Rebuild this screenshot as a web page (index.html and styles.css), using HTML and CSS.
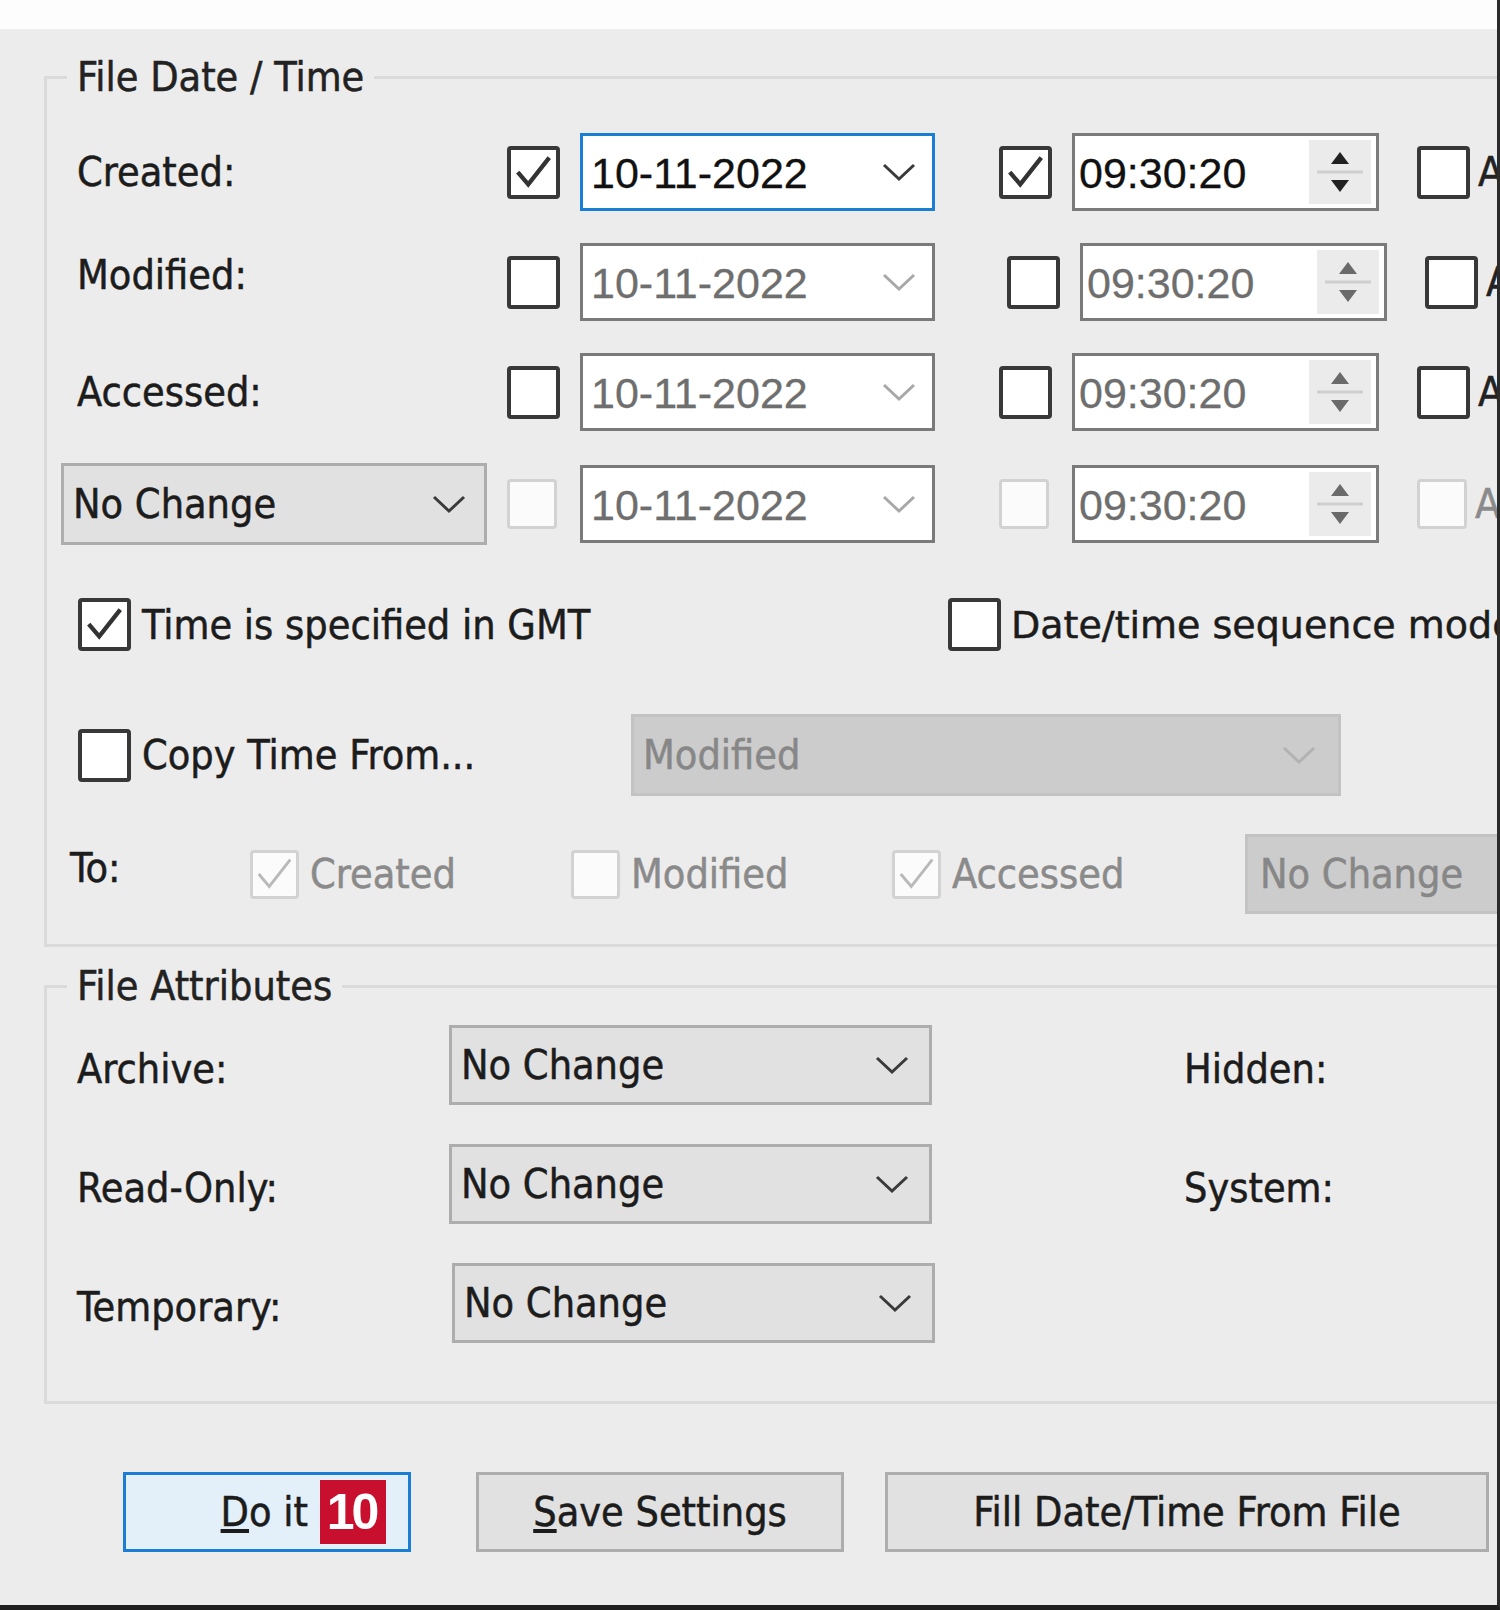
FILE: index.html
```html
<!DOCTYPE html>
<html lang="en">
<head>
<meta charset="utf-8">
<title>File Date / Time</title>
<link rel="stylesheet" href="styles.css">
</head>
<body>
<div class="window">
  <div class="titlebar"></div>

  <fieldset class="group group-dates">
    <legend>File Date / Time</legend>

    <div class="dt-row">
      <span class="lbl">Created:</span>
      <span class="cb checked"><svg viewBox="0 0 45 45"><polyline points="6,22 17,35 39,7"/></svg></span>
      <div class="field date focus"><span class="val">10-11-2022</span><svg class="chev" viewBox="0 0 34 20"><polyline points="2,3 17,17 32,3"/></svg></div>
      <span class="cb cb2 checked"><svg viewBox="0 0 45 45"><polyline points="6,22 17,35 39,7"/></svg></span>
      <div class="field time"><span class="val">09:30:20</span><span class="spin"><svg viewBox="0 0 62 64"><polygon class="arr" points="31,12 40,24 22,24"/><line x1="8" y1="32" x2="54" y2="32"/><polygon class="arr" points="22,40 40,40 31,52"/></svg></span></div>
      <span class="tail"><span class="cb"></span><span class="cut">A</span></span>
    </div>

    <div class="dt-row shift">
      <span class="lbl lbl-up">Modified:</span>
      <span class="cb"></span>
      <div class="field date off"><span class="val">10-11-2022</span><svg class="chev" viewBox="0 0 34 20"><polyline points="2,3 17,17 32,3"/></svg></div>
      <span class="cb cb2"></span>
      <div class="field time off"><span class="val">09:30:20</span><span class="spin"><svg viewBox="0 0 62 64"><polygon class="arr" points="31,12 40,24 22,24"/><line x1="8" y1="32" x2="54" y2="32"/><polygon class="arr" points="22,40 40,40 31,52"/></svg></span></div>
      <span class="tail"><span class="cb"></span><span class="cut">A</span></span>
    </div>

    <div class="dt-row">
      <span class="lbl">Accessed:</span>
      <span class="cb"></span>
      <div class="field date off"><span class="val">10-11-2022</span><svg class="chev" viewBox="0 0 34 20"><polyline points="2,3 17,17 32,3"/></svg></div>
      <span class="cb cb2"></span>
      <div class="field time off"><span class="val">09:30:20</span><span class="spin"><svg viewBox="0 0 62 64"><polygon class="arr" points="31,12 40,24 22,24"/><line x1="8" y1="32" x2="54" y2="32"/><polygon class="arr" points="22,40 40,40 31,52"/></svg></span></div>
      <span class="tail"><span class="cb"></span><span class="cut">A</span></span>
    </div>

    <div class="dt-row">
      <div class="combo combo-row"><span class="val">No Change</span><svg class="chev" viewBox="0 0 34 20"><polyline points="2,3 17,17 32,3"/></svg></div>
      <span class="cb dis"></span>
      <div class="field date off"><span class="val">10-11-2022</span><svg class="chev" viewBox="0 0 34 20"><polyline points="2,3 17,17 32,3"/></svg></div>
      <span class="cb cb2 dis"></span>
      <div class="field time off"><span class="val">09:30:20</span><span class="spin"><svg viewBox="0 0 62 64"><polygon class="arr" points="31,12 40,24 22,24"/><line x1="8" y1="32" x2="54" y2="32"/><polygon class="arr" points="22,40 40,40 31,52"/></svg></span></div>
      <span class="tail"><span class="cb dis"></span><span class="cut off-text">A</span></span>
    </div>

    <div class="opt-row">
      <label class="chk"><span class="cb checked"><svg viewBox="0 0 45 45"><polyline points="6,22 17,35 39,7"/></svg></span><span>Time is specified in GMT</span></label>
      <label class="chk chk-wide"><span class="cb"></span><span>Date/time sequence mode</span></label>
    </div>

    <div class="copy-row">
      <label class="chk"><span class="cb"></span><span>Copy Time From...</span></label>
      <div class="combo disabled combo-copy"><span class="val">Modified</span><svg class="chev" viewBox="0 0 34 20"><polyline points="2,3 17,17 32,3"/></svg></div>
    </div>

    <div class="to-row">
      <span class="lbl">To:</span>
      <label class="chk off-text"><span class="cb dis checked"><svg viewBox="0 0 45 45"><polyline points="6,22 17,35 39,7"/></svg></span><span>Created</span></label>
      <label class="chk off-text"><span class="cb dis"></span><span>Modified</span></label>
      <label class="chk off-text"><span class="cb dis checked"><svg viewBox="0 0 45 45"><polyline points="6,22 17,35 39,7"/></svg></span><span>Accessed</span></label>
      <div class="combo disabled combo-to"><span class="val">No Change</span></div>
    </div>
  </fieldset>

  <fieldset class="group group-attrs">
    <legend>File Attributes</legend>
    <div class="attr-row">
      <span class="lbl">Archive:</span>
      <div class="combo combo-attr"><span class="val">No Change</span><svg class="chev" viewBox="0 0 34 20"><polyline points="2,3 17,17 32,3"/></svg></div>
      <span class="lbl">Hidden:</span>
    </div>
    <div class="attr-row">
      <span class="lbl">Read-Only:</span>
      <div class="combo combo-attr"><span class="val">No Change</span><svg class="chev" viewBox="0 0 34 20"><polyline points="2,3 17,17 32,3"/></svg></div>
      <span class="lbl">System:</span>
    </div>
    <div class="attr-row">
      <span class="lbl">Temporary:</span>
      <div class="combo combo-attr combo-shift"><span class="val">No Change</span><svg class="chev" viewBox="0 0 34 20"><polyline points="2,3 17,17 32,3"/></svg></div>
      <span></span>
    </div>
  </fieldset>

  <div class="buttons">
    <button class="btn btn-default" type="button"><span><u>D</u>o it</span><span class="badge">10</span></button>
    <button class="btn btn-save" type="button"><span><u>S</u>ave Settings</span></button>
    <button class="btn btn-fill" type="button"><span>Fill Date/Time From File</span></button>
  </div>
</div>
</body>
</html>
```

FILE: styles.css
```css
* {
  box-sizing: border-box;
  margin: 0;
  padding: 0;
}

html, body {
  width: 1500px;
  height: 1610px;
  overflow: hidden;
  background: #ececec;
}

body {
  font-family: "DejaVu Sans Condensed", "DejaVu Sans", sans-serif;
  font-stretch: condensed;
  font-size: 41px;
  color: #1c1c1c;
  -webkit-text-stroke: 0.5px currentColor;
}

.window {
  width: 1500px;
  height: 1610px;
  background: #ececec;
  border-right: 3px solid #2b2b2b;
  border-bottom: 5px solid #1f1f1f;
  overflow: hidden;
}

.titlebar {
  height: 29px;
  background: #fdfdfd;
}

/* group boxes */
.group {
  margin-left: 44px;
  width: 1500px;
  border: 3px solid #dadada;
  padding: 0;
}

.group legend {
  margin-left: 20px;
  padding: 0 10px;
  height: 48px;
  line-height: 48px;
  color: #222;
}

.group-dates {
  margin-top: 24px;
  padding-top: 32px;
  padding-bottom: 30px;
}

.group-attrs {
  margin-top: 15px;
  padding-top: 15px;
  padding-bottom: 58px;
}

.lbl {
  white-space: nowrap;
}

.lbl-up {
  position: relative;
  top: -7px;
}

/* checkbox */
.cb {
  width: 53px;
  height: 53px;
  border: 4px solid #383838;
  border-radius: 4px;
  background: #fff;
  display: inline-flex;
  align-items: center;
  justify-content: center;
  flex: none;
  -webkit-text-stroke: 0;
}

.cb svg {
  width: 43px;
  height: 43px;
  display: none;
}

.cb.checked svg {
  display: block;
}

.cb polyline {
  fill: none;
  stroke: #333;
  stroke-width: 4.5;
  stroke-linejoin: miter;
}

.cb.dis {
  border: 3px solid #d2d2d2;
  background: #fbfbfb;
  width: 50px;
  height: 50px;
}

.cb.dis polyline {
  stroke: #b9b9b9;
  stroke-width: 3;
}

/* rows of the date block */
.dt-row {
  display: grid;
  grid-template-columns: 430px 73px 419px 73px 345px auto;
  align-items: center;
  height: 78px;
  padding-left: 30px;
  margin-bottom: 32px;
}

.dt-row.shift > .cb2,
.dt-row.shift > .time,
.dt-row.shift > .tail {
  margin-left: 8px;
}

.field {
  height: 78px;
  border: 3px solid #7a7a7a;
  background: #fff;
  display: flex;
  align-items: center;
  font-family: "Liberation Sans", Arial, sans-serif;
  font-stretch: normal;
  font-size: 43px;
  color: #111;
  -webkit-text-stroke: 0.3px currentColor;
}

.field.date {
  width: 355px;
  padding: 0 16px 0 8px;
  justify-content: space-between;
}

.field.focus {
  border-color: #1a7fd4;
}

.field.time {
  width: 307px;
  padding: 0 5px 0 4px;
  justify-content: space-between;
}

.field.off {
  color: #6e6e6e;
}

.field .val {
  padding-top: 2px;
}

.chev {
  width: 34px;
  height: 20px;
  flex: none;
}

.chev polyline {
  fill: none;
  stroke: #3a3a3a;
  stroke-width: 3;
}

.field.off .chev polyline {
  stroke: #a8a8a8;
}

.spin {
  width: 62px;
  height: 64px;
  background: #ebebeb;
  display: block;
}

.spin svg {
  width: 62px;
  height: 64px;
  display: block;
}

.spin .arr {
  fill: #222;
}

.spin line {
  stroke: #cfcfcf;
  stroke-width: 3;
}

.field.off .spin .arr {
  fill: #6a6a6a;
}

.tail {
  display: flex;
  align-items: center;
  gap: 8px;
}

.cut {
  color: #222;
}

.off-text {
  color: #8a8a8a;
}

/* combo boxes */
.combo {
  height: 80px;
  border: 3px solid #adadad;
  background: #e1e1e1;
  display: flex;
  align-items: center;
  justify-content: space-between;
  padding: 0 18px 0 9px;
  color: #1c1c1c;
  white-space: nowrap;
}

.combo-row {
  width: 426px;
  height: 82px;
  margin-left: -16px;
}

.combo.disabled {
  background: #cccccc;
  border-color: #c3c3c3;
  color: #878787;
}

.combo.disabled .chev polyline {
  stroke: #b2b2b2;
}

.combo-copy {
  width: 710px;
  height: 82px;
  padding-right: 22px;
}

.combo-to {
  width: 300px;
  height: 80px;
  padding-left: 12px;
}

.combo-attr {
  width: 483px;
  height: 80px;
  padding-right: 20px;
}

.combo-shift {
  margin-left: 3px;
}

/* option rows */
.chk {
  display: flex;
  align-items: center;
  gap: 11px;
  white-space: nowrap;
}

.chk-wide {
  gap: 10px;
  font-family: "DejaVu Sans", sans-serif;
  font-stretch: normal;
  font-size: 38px;
}

.opt-row {
  display: grid;
  grid-template-columns: 870px auto;
  align-items: center;
  height: 53px;
  padding-left: 31px;
  margin-top: 57px;
}

.copy-row {
  display: grid;
  grid-template-columns: 553px auto;
  align-items: center;
  height: 82px;
  padding-left: 31px;
  margin-top: 63px;
}

.to-row {
  display: grid;
  grid-template-columns: 180px 321px 321px 353px auto;
  align-items: center;
  height: 80px;
  padding-left: 23px;
  margin-top: 38px;
}

.to-row > .lbl {
  position: relative;
  top: -6px;
}

.to-row .cb {
  width: 49px;
  height: 49px;
}

/* attribute rows */
.attr-row {
  display: grid;
  grid-template-columns: 372px 735px auto;
  align-items: center;
  height: 80px;
  padding-left: 30px;
  margin-bottom: 39px;
}

.attr-row:last-child {
  margin-bottom: 0;
}

.attr-row > .lbl {
  position: relative;
  top: 4px;
}

/* buttons */
.buttons {
  display: grid;
  grid-template-columns: 353px 409px 604px;
  padding-left: 123px;
  margin-top: 68px;
}

.btn {
  height: 80px;
  border: 3px solid #adadad;
  background: #e1e1e1;
  font: inherit;
  font-stretch: condensed;
  color: #1c1c1c;
  display: flex;
  align-items: center;
  justify-content: center;
}

.btn-default {
  width: 288px;
  background: #e3f0fa;
  border-color: #1a7fd4;
  justify-content: flex-end;
  padding-right: 22px;
  gap: 12px;
}

.btn-save {
  width: 368px;
}

.btn-fill {
  width: 604px;
}

.badge {
  background: #c8102e;
  color: #fff;
  font-family: "Liberation Sans", Arial, sans-serif;
  font-stretch: normal;
  font-weight: bold;
  font-size: 50px;
  letter-spacing: -3px;
  width: 66px;
  height: 64px;
  display: flex;
  align-items: center;
  justify-content: center;
  padding-right: 3px;
  -webkit-text-stroke: 0;
}
```
